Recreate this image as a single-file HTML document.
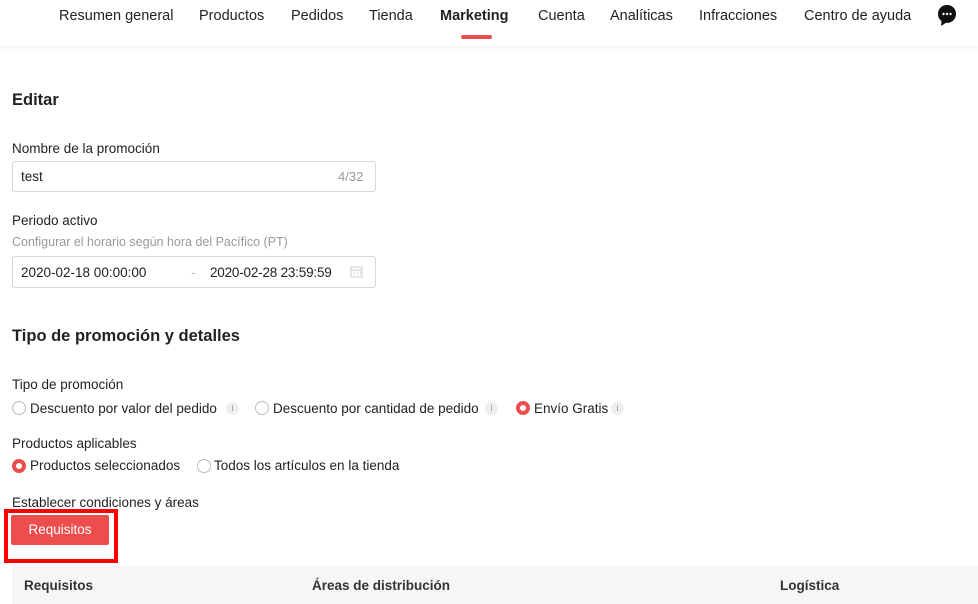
<!DOCTYPE html>
<html><head><meta charset="utf-8"><style>
*{margin:0;padding:0;box-sizing:border-box}
body{width:978px;height:604px;overflow:hidden;background:#fff;font-family:"Liberation Sans",sans-serif;color:#222;font-size:13.5px;position:relative}
.a{position:absolute;white-space:nowrap}
.hdr{position:absolute;left:0;top:0;width:978px;height:46px;background:#fff;box-shadow:0 2px 6px rgba(0,0,0,.07)}
.nav{position:absolute;top:8px;font-size:14.5px;color:#222}
.h{font-weight:bold;font-size:16.5px;color:#222}
.inp{position:absolute;border:1px solid #d8d8d8;border-radius:3px;background:#fff}
.rb{position:absolute;width:14px;height:14px;border-radius:50%;border:1px solid #bbb;background:#fff}
.rs{border:4px solid #ee4d4d}
.i{position:absolute;width:13px;height:13px;border-radius:50%;background:#eee;color:#999;font-size:9px;text-align:center;line-height:13px}
</style></head><body>
<div class="hdr">
<span class="a nav" style="left:59px">Resumen general</span>
<span class="a nav" style="left:199px">Productos</span>
<span class="a nav" style="left:291px">Pedidos</span>
<span class="a nav" style="left:369px">Tienda</span>
<span class="a nav" style="left:440px;font-weight:bold">Marketing</span>
<span class="a nav" style="left:538px">Cuenta</span>
<span class="a nav" style="left:610px">Analíticas</span>
<span class="a nav" style="left:699px">Infracciones</span>
<span class="a nav" style="left:804px">Centro de ayuda</span>
<div class="a" style="left:461px;top:35px;width:31px;height:4px;border-radius:2px;background:#ee4d4d"></div>
<svg class="a" style="left:936px;top:4px" width="22" height="24" viewBox="0 0 22 24"><path d="M11 1C5.5 1 2 5 2 10c0 3 1.3 5.5 3.5 7L5 22l5-3.2c.3 0 .7.1 1 .1 5.5 0 9-4 9-9S16.5 1 11 1z" fill="#111"/><circle cx="7.5" cy="10" r="1.2" fill="#fff"/><circle cx="11" cy="10" r="1.2" fill="#fff"/><circle cx="14.5" cy="10" r="1.2" fill="#fff"/></svg>
</div>
<span class="a h" style="left:12px;top:91px">Editar</span>
<span class="a" style="left:12px;top:141px">Nombre de la promoción</span>
<div class="inp" style="left:12px;top:161px;width:364px;height:31px"></div>
<span class="a" style="left:21px;top:169px">test</span>
<span class="a" style="left:338px;top:169px;color:#999;font-size:13px">4/32</span>
<span class="a" style="left:12px;top:213px">Periodo activo</span>
<span class="a" style="left:12px;top:235px;color:#999;font-size:12.5px">Configurar el horario según hora del Pacífico (PT)</span>
<div class="inp" style="left:12px;top:256px;width:364px;height:32px"></div>
<span class="a" style="left:21px;top:265px">2020-02-18 00:00:00</span>
<span class="a" style="left:191px;top:265px;color:#bbb">-</span>
<span class="a" style="left:210px;top:265px;letter-spacing:-0.2px">2020-02-28 23:59:59</span>
<svg class="a" style="left:350px;top:265px" width="13" height="13" viewBox="0 0 13 13"><rect x="1" y="2" width="11" height="10" fill="none" stroke="#ccc"/><path d="M1 5h11M4 7h1M7 7h1M10 7h1M4 9h1M7 9h1M10 9h1" stroke="#ccc"/></svg>
<span class="a h" style="left:12px;top:327px">Tipo de promoción y detalles</span>
<span class="a" style="left:12px;top:377px">Tipo de promoción</span>
<div class="rb" style="left:12px;top:401px"></div>
<span class="a" style="left:30px;top:401px">Descuento por valor del pedido</span>
<div class="i" style="left:226px;top:402px">i</div>
<div class="rb" style="left:255px;top:401px"></div>
<span class="a" style="left:273px;top:401px">Descuento por cantidad de pedido</span>
<div class="i" style="left:485px;top:402px">i</div>
<div class="rb rs" style="left:516px;top:401px"></div>
<span class="a" style="left:534px;top:401px">Envío Gratis</span>
<div class="i" style="left:611px;top:402px">i</div>
<span class="a" style="left:12px;top:436px">Productos aplicables</span>
<div class="rb rs" style="left:12px;top:459px"></div>
<span class="a" style="left:30px;top:458px">Productos seleccionados</span>
<div class="rb" style="left:197px;top:459px"></div>
<span class="a" style="left:214px;top:458px">Todos los artículos en la tienda</span>
<span class="a" style="left:12px;top:495px">Establecer condiciones y áreas</span>
<div class="a" style="left:4px;top:509px;width:114px;height:54px;border:4px solid #f00"></div>
<div class="a" style="left:11px;top:515px;width:98px;height:30px;background:#ee4d4d;border-radius:2px;color:#fff;text-align:center;line-height:30px;font-size:13.5px">Requisitos</div>
<div class="a" style="left:12px;top:566px;width:966px;height:38px;background:#f6f6f9"></div>
<span class="a" style="left:24px;top:578px;font-weight:bold;color:#333">Requisitos</span>
<span class="a" style="left:312px;top:578px;font-weight:bold;color:#333">Áreas de distribución</span>
<span class="a" style="left:780px;top:578px;font-weight:bold;color:#333">Logística</span>
</body></html>
